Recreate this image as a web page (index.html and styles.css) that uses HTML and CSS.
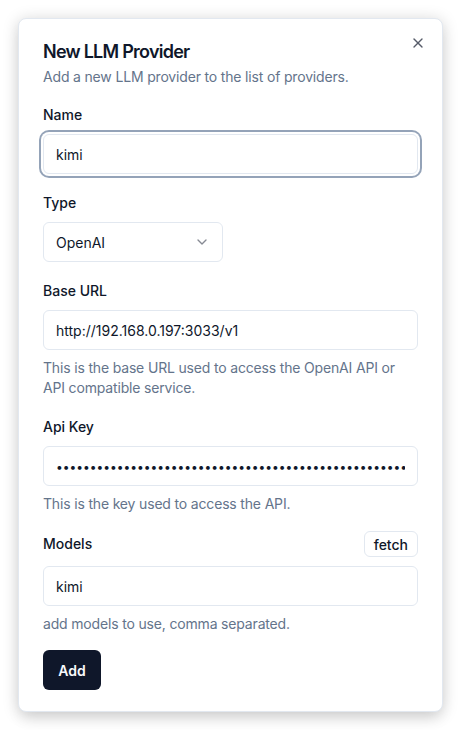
FILE: index.html
```html
<!DOCTYPE html>
<html lang="en">
<head>
<meta charset="utf-8">
<title>New LLM Provider</title>
<link rel="stylesheet" href="styles.css">
</head>
<body>
<div class="dialog" role="dialog">
  <div class="header">
    <h2 class="title">New LLM Provider</h2>
    <p class="desc">Add a new LLM provider to the list of providers.</p>
  </div>
  <form class="form">
    <div class="field">
      <label class="label" for="name">Name</label>
      <input class="input is-focused" id="name" type="text" value="kimi">
    </div>
    <div class="field">
      <label class="label">Type</label>
      <div class="select">
        <span>OpenAI</span>
        <svg class="chev" width="16" height="16" viewBox="0 0 24 24" fill="none" stroke="currentColor" stroke-width="2" stroke-linecap="round" stroke-linejoin="round"><path d="m6 9 6 6 6-6"/></svg>
      </div>
    </div>
    <div class="field">
      <label class="label" for="url">Base URL</label>
      <input class="input" id="url" type="text" value="http://192.168.0.197:3033/v1">
      <p class="help">This is the base URL used to access the OpenAI API or API compatible service.</p>
    </div>
    <div class="field">
      <label class="label" for="key">Api Key</label>
      <input class="input input-secret" id="key" type="password" value="sk-aaaaaaaaaaaaaaaaaaaaaaaaaaaaaaaaaaaaaaaaaaaaaaaaaaaaaaaaaaaaaaaaaaaa">
      <p class="help">This is the key used to access the API.</p>
    </div>
    <div class="field field-models">
      <div class="label-row">
        <label class="label" for="models">Models</label>
        <button type="button" class="btn-outline">fetch</button>
      </div>
      <input class="input" id="models" type="text" value="kimi">
      <p class="help">add models to use, comma separated.</p>
    </div>
    <div class="actions">
      <button type="button" class="btn-primary">Add</button>
    </div>
  </form>
  <button type="button" class="close" aria-label="Close">
    <svg width="16" height="16" viewBox="0 0 24 24" fill="none" stroke="currentColor" stroke-width="2" stroke-linecap="round" stroke-linejoin="round"><path d="M18 6 6 18"/><path d="m6 6 12 12"/></svg>
  </button>
</div>
</body>
</html>
```
FILE: styles.css
```css
* { box-sizing: border-box; }
html, body { margin: 0; padding: 0; }
body {
  background: #ffffff;
  font-family: Inter, "Noto Sans", sans-serif;
  color: #0f172a;
  min-height: 100vh;
  display: flex;
  align-items: center;
  justify-content: center;
}
.dialog {
  position: relative;
  width: 425px;
  max-height: 95vh;
  overflow: hidden;
  background: #ffffff;
  border: 1px solid #e2e8f0;
  border-radius: 8px;
  padding: 24px;
  box-shadow: 0 2px 16px rgba(0,0,0,0.18), 0 10px 15px -3px rgba(0,0,0,0.08);
}
.header { display: flex; flex-direction: column; gap: 6px; }
.title {
  margin: 0;
  font-size: 18px;
  line-height: 18px;
  font-weight: 600;
  letter-spacing: -0.75px;
  color: #0f172a;
}
.desc {
  margin: 0;
  font-size: 14px;
  line-height: 20px;
  letter-spacing: -0.17px;
  color: #64748b;
}
.form {
  display: flex;
  flex-direction: column;
  gap: 22px;
  margin-top: 21px;
}
.field { display: flex; flex-direction: column; gap: 8px; }
.label {
  display: block;
  font-size: 14px;
  line-height: 14px;
  font-weight: 500;
  color: #0f172a;
  margin-bottom: 4px;
}
.input {
  display: block;
  width: 100%;
  height: 40px;
  border: 1px solid #e2e8f0;
  border-radius: 6px;
  padding: 0 12px;
  font-family: Inter, "Noto Sans", sans-serif;
  font-size: 14px;
  color: #0f172a;
  background: #ffffff;
  outline: none;
}
.input-secret {
  font-size: 12px;
}
.input.is-focused {
  box-shadow: 0 0 0 2px #ffffff, 0 0 0 4px #94a3b8;
}
.select {
  width: 180px;
  height: 40px;
  border: 1px solid #e2e8f0;
  border-radius: 6px;
  padding: 0 12px;
  display: flex;
  align-items: center;
  justify-content: space-between;
  font-size: 14px;
  color: #0f172a;
}
.chev { opacity: 0.5; }
.help {
  margin: 0;
  font-size: 14px;
  line-height: 20px;
  letter-spacing: -0.17px;
  color: #64748b;
}
.field-models { margin-top: -5px; }
.label-row {
  display: flex;
  align-items: center;
  justify-content: space-between;
  height: 26px;
  margin-bottom: 1px;
}
.label-row .label { margin-bottom: 0; }
.btn-outline {
  height: 26px;
  padding: 0 9px;
  border: 1px solid #e2e8f0;
  border-radius: 6px;
  background: #ffffff;
  font-family: Inter, "Noto Sans", sans-serif;
  font-size: 14px;
  font-weight: 500;
  color: #0f172a;
}
.actions { margin-top: -6px; }
.btn-primary {
  height: 40px;
  width: 58px;
  padding: 0;
  border: none;
  border-radius: 6px;
  background: #0f172a;
  color: #f8fafc;
  font-family: Inter, "Noto Sans", sans-serif;
  font-size: 14px;
  font-weight: 600;
}
.close {
  position: absolute;
  top: 16px;
  right: 16px;
  width: 16px;
  height: 16px;
  padding: 0;
  border: none;
  background: transparent;
  color: #0f172a;
  opacity: 0.7;
  display: flex;
}
```
